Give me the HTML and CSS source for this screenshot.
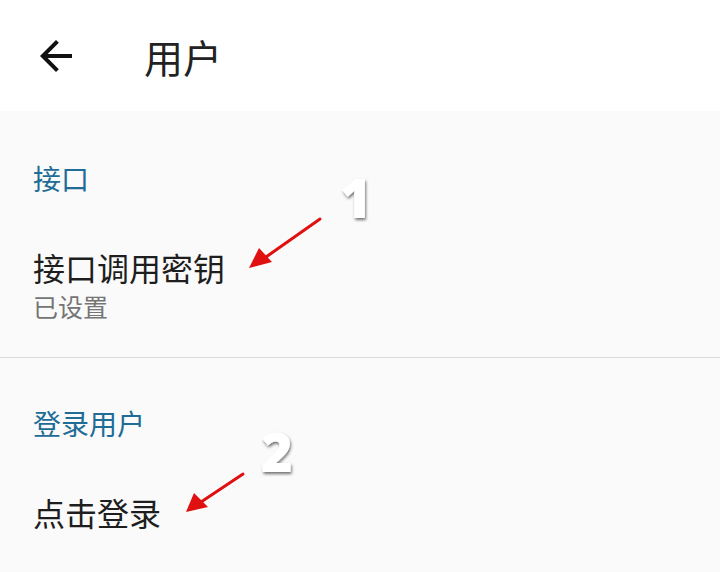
FILE: index.html
```html
<!DOCTYPE html>
<html lang="zh-CN">
<head>
  <meta charset="UTF-8" />
  <title>用户</title>
  <meta name="viewport" content="width=device-width, initial-scale=1.0"/>
  <link rel="stylesheet" href="styles.css">
</head>
<body>
  <!-- Top bar -->
  <header class="appbar">
    <button class="back-btn" aria-label="返回">
      <svg viewBox="0 0 24 24" width="48" height="48">
        <path d="M20 11H7.83l5.59-5.59L12 4l-8 8 8 8 1.41-1.41L7.83 13H20v-2z" fill="#111"/>
      </svg>
    </button>
    <h1 class="appbar-title">用户</h1>
  </header>

  <!-- Preference list -->
  <main class="prefs">
    <section class="pref-group">
      <h2 class="pref-category">接口</h2>
      <div class="pref-item">
        <div class="pref-title">接口调用密钥</div>
        <div class="pref-summary">已设置</div>
      </div>
    </section>

    <section class="pref-group">
      <h2 class="pref-category">登录用户</h2>
      <div class="pref-item">
        <div class="pref-title">点击登录</div>
      </div>
    </section>
  </main>

  <!-- Annotation overlay -->
  <svg class="annotations" width="720" height="572" viewBox="0 0 720 572">
    <defs>
      <filter id="shadow" x="-50%" y="-50%" width="200%" height="200%">
        <feDropShadow dx="1" dy="2" stdDeviation="1.5" flood-color="#000" flood-opacity="0.55"/>
      </filter>
    </defs>
    <g class="marker">
      <line x1="320" y1="219" x2="266" y2="257" stroke="#e01010" stroke-width="3" stroke-linecap="round"/>
      <polygon points="249,268 259,248 272,262" fill="#e01010"/>
      <text x="340" y="218" class="num" filter="url(#shadow)">1</text>
    </g>
    <g class="marker">
      <line x1="243" y1="474" x2="201" y2="502" stroke="#e01010" stroke-width="3" stroke-linecap="round"/>
      <polygon points="186,512 194,493 208,507" fill="#e01010"/>
      <text x="261" y="472" class="num" filter="url(#shadow)">2</text>
    </g>
  </svg>
</body>
</html>
```

FILE: styles.css
```css
/* =============== BASE =============== */
html,
body {
  margin: 0;
  padding: 0;
  height: 100%;
  font-family: "Noto Sans CJK SC", "Noto Sans", sans-serif;
  background-color: #fafafa;
  color: #222;
  overflow: hidden;
}

body {
  position: relative;
}

/* =============== APP BAR =============== */
.appbar {
  display: flex;
  align-items: center;
  height: 111px;
  background: #fff;
  padding-left: 32px;
}

.back-btn {
  display: flex;
  width: 48px;
  height: 48px;
  padding: 0;
  border: none;
  background: none;
}

.appbar-title {
  margin: 0 0 0 64px;
  font-size: 39px;
  font-weight: 400;
  line-height: 44px;
  color: #222;
}

/* =============== PREFERENCES =============== */
.pref-group {
  padding: 49px 33px 35px;
}

.pref-group + .pref-group {
  border-top: 1px solid #dcdcdc;
  padding-top: 47px;
}

.pref-category {
  margin: 0;
  font-size: 28px;
  line-height: 36px;
  font-weight: 400;
  color: #216c96;
}

.pref-item {
  margin-top: 51px;
}

.pref-title {
  font-size: 32px;
  line-height: 40px;
  color: #1e1e1e;
}

.pref-summary {
  margin-top: 3px;
  font-size: 25px;
  line-height: 32px;
  color: #757575;
}

/* =============== ANNOTATIONS =============== */
.annotations {
  position: absolute;
  top: 0;
  left: 0;
  pointer-events: none;
}

.num {
  font-family: "Open Sans", "Roboto", sans-serif;
  font-weight: 800;
  font-size: 54px;
  fill: #fff;
}
```
